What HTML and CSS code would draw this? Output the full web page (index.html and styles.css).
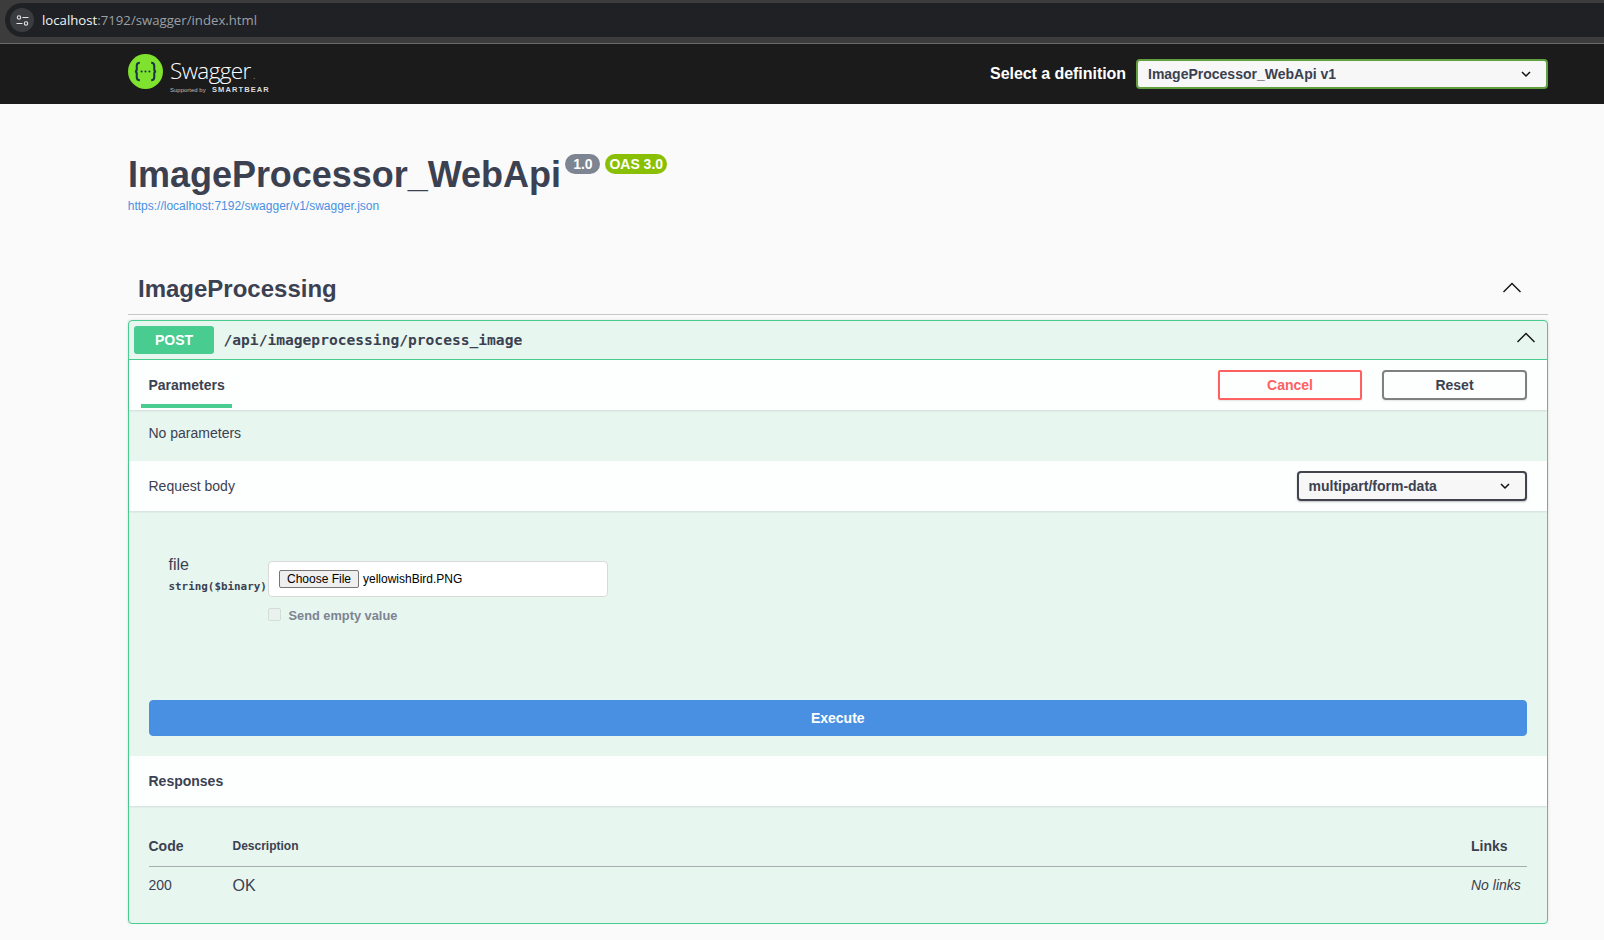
FILE: index.html
```html
<!DOCTYPE html>
<html lang="en">
<head>
<meta charset="UTF-8">
<title>Swagger UI</title>
<link rel="stylesheet" href="styles.css">
</head>
<body>
<div class="browser-bar">
  <div class="address">
    <span class="site-info">
      <svg width="13" height="11" viewBox="0 0 13 11" fill="none" stroke="#e3e3e3" stroke-width="1.1">
        <circle cx="3" cy="2.500" r="1.700"/>
        <path d="M6.500 2.500h6M0.500 8.500h6"/>
        <circle cx="10" cy="8.500" r="1.700"/>
      </svg>
    </span>
    <span class="url"><span class="url-host">localhost</span>:7192/swagger/index.html</span>
  </div>
</div>

<header class="topbar">
  <div class="logo">
    <svg class="logo-mark" width="35" height="35" viewBox="0 0 34 34">
      <circle cx="17" cy="17" r="17" fill="#7ee22e"/>
      <path d="M11.500 8.500c-2.500 0-3 1-3 3v3.500c0 1.300-.7 2-1.800 2 1.100 0 1.800.7 1.800 2v3.500c0 2 .5 3 3 3M22.500 8.500c2.500 0 3 1 3 3v3.500c0 1.300.7 2 1.800 2-1.100 0-1.800.7-1.800 2v3.500c0 2-.5 3-3 3" fill="none" stroke="#173646" stroke-width="2"/>
      <circle cx="13.200" cy="17" r="1" fill="#173646"/>
      <circle cx="17" cy="17" r="1" fill="#173646"/>
      <circle cx="20.800" cy="17" r="1" fill="#173646"/>
    </svg>
    <div class="logo-text">
      <div class="logo-name">Swagger<span class="logo-dot">.</span></div>
      <div class="logo-sub"><span class="logo-by">Supported by</span><span class="logo-bear">SMARTBEAR</span></div>
    </div>
  </div>
  <div class="definition">
    <span class="definition-label">Select a definition</span>
    <div class="select definition-select">
      <span>ImageProcessor_WebApi v1</span>
      <svg width="10" height="7" viewBox="0 0 10 7" fill="none" stroke="#111" stroke-width="1.500"><path d="M1 1l4 4 4-4"/></svg>
    </div>
  </div>
</header>

<main class="wrapper">
  <section class="info">
    <div class="title-row">
      <h1>ImageProcessor_WebApi</h1>
      <span class="badge badge-version">1.0</span>
      <span class="badge badge-oas">OAS 3.0</span>
    </div>
    <a class="spec-link" href="#">https://localhost:7192/swagger/v1/swagger.json</a>
  </section>

  <div class="tag-row">
    <h3>ImageProcessing</h3>
    <svg class="chevron" width="20" height="11" viewBox="0 0 20 11" fill="none" stroke="#111" stroke-width="1.400"><path d="M1.500 10 10 1.500 18.500 10"/></svg>
  </div>

  <section class="opblock">
    <div class="summary">
      <span class="method">POST</span>
      <span class="path">/api/imageprocessing/process_image</span>
      <svg class="chevron" width="20" height="11" viewBox="0 0 20 11" fill="none" stroke="#111" stroke-width="1.400"><path d="M1.500 10 10 1.500 18.500 10"/></svg>
    </div>

    <div class="section-head tabs-head">
      <div class="tab">Parameters</div>
      <div class="actions">
        <button class="btn btn-cancel">Cancel</button>
        <button class="btn btn-reset">Reset</button>
      </div>
    </div>
    <div class="no-params">No parameters</div>

    <div class="section-head body-head">
      <span>Request body</span>
      <div class="select type-select">
        <span>multipart/form-data</span>
        <svg width="10" height="7" viewBox="0 0 10 7" fill="none" stroke="#111" stroke-width="1.500"><path d="M1 1l4 4 4-4"/></svg>
      </div>
    </div>

    <div class="body-panel">
      <div class="param">
        <div class="param-name">
          <div class="param-label">file</div>
          <div class="param-type">string($binary)</div>
        </div>
        <div class="param-value">
          <div class="file-box">
            <button class="file-btn">Choose File</button>
            <span class="file-name">yellowishBird.PNG</span>
          </div>
          <label class="empty-value"><span class="fake-check"></span><span class="empty-text">Send empty value</span></label>
        </div>
      </div>
      <button class="execute">Execute</button>
    </div>

    <div class="section-head responses-head">Responses</div>
    <div class="responses">
      <div class="resp-grid resp-header">
        <span class="col-code">Code</span>
        <span class="col-desc">Description</span>
        <span class="col-links">Links</span>
      </div>
      <div class="resp-grid resp-row">
        <span class="cell-code">200</span>
        <span class="cell-desc">OK</span>
        <span class="cell-links">No links</span>
      </div>
    </div>
  </section>
</main>
</body>
</html>
```

FILE: styles.css
```css
/* Basic page */
* {
  box-sizing: border-box;
}
body {
  margin: 0;
  background-color: #fafafa;
  color: #3b4151;
  font-family: "Liberation Sans", Arial, sans-serif;
  font-size: 14px;
}

/* Browser address bar */
.browser-bar {
  height: 44px;
  padding: 3px 0 6px 0;
  background-color: #3c3c3c;
  border-bottom: 1px solid #6b6b6b;
}
.address {
  height: 34px;
  margin-left: 5px;
  display: flex;
  align-items: center;
  gap: 8px;
  padding-left: 5px;
  background-color: #202124;
  border-radius: 17px 0 0 17px;
}
.site-info {
  width: 24px;
  height: 24px;
  display: flex;
  align-items: center;
  justify-content: center;
  border-radius: 50%;
  background-color: #3b3c3f;
}
.url {
  font-family: "Open Sans", sans-serif;
  font-size: 13.2px;
  color: #9aa0a6;
}
.url-host {
  color: #f1f3f4;
}

/* Swagger top bar */
.topbar {
  height: 60px;
  padding: 0 56px 0 128px;
  display: flex;
  align-items: center;
  justify-content: space-between;
  background-color: #1b1b1b;
}
.logo {
  display: flex;
  align-items: center;
  gap: 7px;
  margin-bottom: 6px;
}
.logo-text {
  padding-top: 4px;
}
.logo-name {
  font-family: "Open Sans", sans-serif;
  font-weight: 300;
  font-size: 22.5px;
  line-height: 28px;
  letter-spacing: -0.6px;
  color: #fff;
}
.logo-dot {
  color: #999;
  font-size: 12px;
  margin-left: 2px;
}
.logo-sub {
  display: flex;
  align-items: baseline;
  gap: 4px;
  margin-top: -4px;
  margin-bottom: -5px;
  line-height: 9px;
  color: #ddd;
}
.logo-by {
  font-size: 6px;
  width: 38px;
  white-space: nowrap;
  color: #bbb;
}
.logo-bear {
  font-size: 7.5px;
  font-weight: bold;
  letter-spacing: 1.100px;
}
.definition {
  display: flex;
  align-items: center;
  gap: 10px;
}
.definition-label {
  font-size: 16px;
  font-weight: bold;
  letter-spacing: -0.05px;
  color: #fff;
}
.select {
  height: 30px;
  display: flex;
  align-items: center;
  justify-content: space-between;
  border-radius: 4px;
  background-color: #f7f7f7;
  font-weight: bold;
  color: #3b4151;
}
.definition-select {
  width: 412px;
  padding: 0 15px 0 10px;
  border: 2px solid #62a03f;
}
.type-select {
  width: 230px;
  padding: 0 15px 0 9.500px;
  border: 2px solid #41444e;
  box-shadow: 0 1px 2px rgba(0, 0, 0, 0.25);
}

/* Page content */
.wrapper {
  padding: 0 56px 0 128px;
}
.info {
  padding-top: 51px;
}
.title-row {
  display: flex;
  align-items: flex-start;
  margin-top: -1px;
}
h1 {
  margin: 1px 4.500px 0 0;
  font-size: 36px;
  line-height: 40px;
  font-weight: bold;
  letter-spacing: -0.03px;
}
.badge {
  height: 20px;
  padding: 0 4px;
  border-radius: 10px;
  font-size: 14px;
  line-height: 20px;
  font-weight: bold;
  color: #fff;
}
.badge-version {
  width: 35px;
  text-align: center;
  background-color: #7d8492;
}
.badge-oas {
  margin-left: 5px;
  background-color: #89bf04;
}
.spec-link {
  display: block;
  margin-top: 3px;
  margin-left: -0.300px;
  line-height: 16px;
  font-size: 12px;
  color: #4990e2;
  text-decoration: none;
}
.tag-row {
  height: 51px;
  margin-top: 50px;
  padding: 0 26px 0 10px;
  display: flex;
  align-items: center;
  justify-content: space-between;
  border-bottom: 1px solid #c6c7c9;
}
h3 {
  margin: 0;
  font-size: 24px;
  font-weight: bold;
}
.tag-row .chevron {
  margin-bottom: 4px;
}

/* Operation block */
.opblock {
  margin-top: 5px;
  border: 1px solid #49cc90;
  border-radius: 4px;
  background-color: #e8f6f0;
  box-shadow: 0 0 3px rgba(0, 0, 0, 0.12);
}
.summary {
  height: 39px;
  padding: 5px 11px 5px 5px;
  display: flex;
  align-items: center;
  border-bottom: 1px solid #49cc90;
}
.method {
  width: 80px;
  height: 28px;
  border-radius: 3px;
  background-color: #49cc90;
  color: #fff;
  font-weight: bold;
  text-align: center;
  line-height: 28px;
}
.path {
  margin-left: 9.500px;
  margin-bottom: 1px;
  font-family: "DejaVu Sans Mono", monospace;
  font-size: 14.600px;
  font-weight: bold;
  color: #3b4151;
}
.summary .chevron {
  margin-left: auto;
  margin-bottom: 5px;
}
.section-head {
  display: flex;
  align-items: center;
  justify-content: space-between;
  height: 50px;
  padding: 0 20px 0 19.500px;
  background-color: #fdfefe;
  box-shadow: 0 1px 2px rgba(0, 0, 0, 0.1);
}
.tabs-head {
  padding-left: 12px;
  align-items: stretch;
}
.tab {
  width: 91px;
  height: 48px;
  padding-left: 7.500px;
  line-height: 50px;
  font-weight: bold;
  border-bottom: 4px solid #49cc90;
}
.actions {
  display: flex;
  gap: 20px;
  padding-top: 10px;
}
.btn {
  height: 30px;
  border-radius: 4px;
  background-color: transparent;
  font-family: inherit;
  font-size: 14px;
  font-weight: bold;
  box-shadow: 0 1px 2px rgba(0, 0, 0, 0.1);
}
.btn-cancel {
  width: 144px;
  border: 2px solid #ff6060;
  border-radius: 2px;
  color: #ff6060;
}
.btn-reset {
  width: 145px;
  border: 2px solid #808080;
  color: #3b4151;
}
.no-params {
  height: 51px;
  padding: 13px 20px 0 19.500px;
  line-height: 20px;
}
.body-panel {
  padding: 50px 20px 20px 19.500px;
}
.param {
  height: 139px;
  padding-left: 20px;
  display: flex;
}
.param-name {
  width: 99.500px;
}
.param-label {
  margin-top: -6px;
  font-size: 16px;
  line-height: 20px;
}
.param-type {
  margin-top: 5px;
  font-family: "DejaVu Sans Mono", monospace;
  font-size: 10.900px;
  font-weight: bold;
  line-height: 14px;
  white-space: nowrap;
}
.file-box {
  width: 340px;
  height: 36px;
  padding-left: 10px;
  display: flex;
  align-items: center;
  gap: 4px;
  background-color: #fff;
  border: 1px solid #d9d9d9;
  border-radius: 4px;
  font-size: 12px;
  color: #000;
}
.file-btn {
  width: 80px;
  height: 18px;
  padding: 0;
  background-color: #efefef;
  border: 1px solid #767676;
  border-radius: 2px;
  font-family: inherit;
  font-size: 12px;
  color: #000;
}
.empty-value {
  margin-top: 8px;
  display: flex;
  align-items: center;
  gap: 7.500px;
  font-size: 12.800px;
  font-weight: bold;
  color: #7d8492;
}
.empty-text {
  padding-top: 3px;
}
.fake-check {
  width: 13px;
  height: 13px;
  border: 1px solid #d3dcd8;
  border-radius: 2px;
  background-color: #e9f2ee;
}
.execute {
  display: block;
  width: 100%;
  height: 36px;
  border: 1px solid #4990e2;
  border-radius: 4px;
  background-color: #4990e2;
  color: #fff;
  font-family: inherit;
  font-size: 14px;
  font-weight: bold;
}
.responses-head {
  font-weight: bold;
}
.responses {
  height: 117px;
  padding: 0 20px 0 19.500px;
}
.resp-grid {
  display: grid;
  grid-template-columns: 84px 1fr 56px;
  align-items: center;
}
.resp-header {
  height: 61px;
  padding-top: 20px;
  border-bottom: 1px solid #a9adb1;
  font-weight: bold;
}
.col-desc {
  font-size: 12px;
}
.resp-row {
  height: 36px;
}
.cell-desc {
  font-size: 16px;
  padding-top: 1px;
}
.cell-links {
  font-style: italic;
  white-space: nowrap;
}
```
